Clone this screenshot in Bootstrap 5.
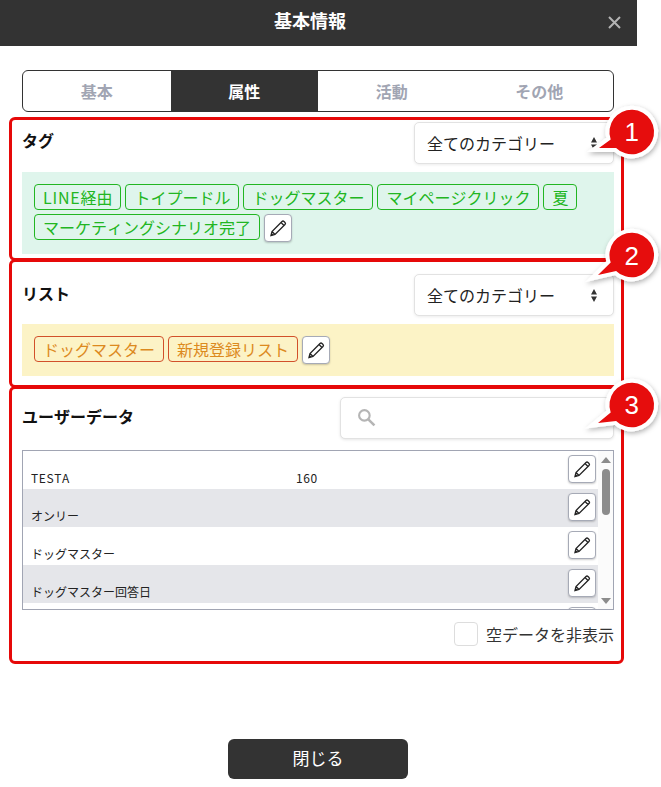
<!DOCTYPE html>
<html lang="ja"><head><meta charset="utf-8">
<title>基本情報</title>
<link rel="stylesheet" href="https://cdn.jsdelivr.net/npm/bootstrap@5.3.0/dist/css/bootstrap.min.css">
<style>
html,body{background:#fff;}
body{font-family:"Noto Sans CJK JP","Liberation Sans",sans-serif;color:#111;width:661px;height:787px;overflow:hidden;position:relative;font-kerning:none;}
.shell{width:637px;height:787px;display:flex;flex-direction:column;}
.topbar{background:#333;height:46px;color:#fff;font-weight:700;font-size:18px;position:relative;padding:0 17px 6px 0;}
.closer{position:absolute;left:608px;top:16px;width:13px;height:13px;}
.mainarea{padding:24px 23px 0 22px;flex:1 1 auto;}
.tabbar{height:42px;border:1px solid #333;border-radius:6px;overflow:hidden;margin-bottom:5px;}
.tabitem{flex:1 1 0;font-weight:700;font-size:16px;color:#a1a5b3;}
.tabitem.on{background:#333;color:#fff;}
.zone{border:3px solid #e60909;border-radius:6px;margin:0 -10px 0 -13px;padding:2px 7px 0 10px;}
.zone1{height:144px;}
.zone2{height:129px;margin-top:-2px;padding-top:12px;}
.zone3{height:278px;margin-top:-2px;padding-top:8px;}
.zonehead{height:42px;margin-bottom:8px;}
.zonehead h2{font-size:16px;font-weight:700;margin:0;color:#111;padding-bottom:2px;}
.zone1 .zonehead h2{padding-bottom:4px;}
.pick.form-select{width:200px;height:42px;font-size:16px;padding:0 12px;color:#222;border:1px solid #e2e2e2;border-radius:5px;box-shadow:0 1px 3px rgba(0,0,0,.08);
 background-image:url("data:image/svg+xml,%3Csvg xmlns='http://www.w3.org/2000/svg' width='6' height='13'%3E%3Cpath d='M3 0l3 5.5h-6zM3 13l3-5.5h-6z' fill='%23333'/%3E%3C/svg%3E");background-size:6px 13px;background-position:right 16px center;}
.tagpanel{padding:12px 12px 0;gap:4px;align-content:flex-start;}
.panelgreen{background:#dff5ec;height:82px;}
.panelyellow{background:#fcf3c6;height:52px;}
.chip{font-size:16px;line-height:24px;height:26px;padding:0 8px;border-radius:4px;border:1px solid;white-space:nowrap;}
.chipgreen{color:#22b622;border-color:#22b622;}
.chiporange{color:#dc8a1e;border-color:#d2502a;}
.widelatin{letter-spacing:.75px;}
.widedigits{letter-spacing:.6px;}
.penbtn.btn{width:28px;height:28px;padding:0;background:#fff;border:1px solid #a6aab6;border-radius:4px;box-shadow:0 1px 2px rgba(0,0,0,.2);display:flex;align-items:center;justify-content:center;}
.searcher{width:274px;height:42px;position:relative;}
.searcher .form-control{height:42px;border:1px solid #e2e2e2;border-radius:5px;box-shadow:0 1px 3px rgba(0,0,0,.1);padding-left:44px;}
.glass{position:absolute;left:17px;top:11px;}
.datawrap{height:160px;border:1px solid #a1a5b3;overflow:hidden;margin-top:11px;background:#fff;}
.datalist{flex:1 1 auto;}
.datarow{height:38px;position:relative;font-size:12px;color:#222;}
.datarow.alt{background:#e5e6ea;}
.rowname{position:absolute;left:8px;bottom:2px;line-height:18px;}
.rowval{position:absolute;left:273px;bottom:2px;line-height:18px;}
.datarow .penbtn{position:absolute;left:545px;top:4px;}
.scrolltrack{width:15px;background:#fbfbfb;position:relative;flex:0 0 15px;}
.thumb{position:absolute;left:4px;top:18px;width:8px;height:46px;background:#8c8c8c;border-radius:4px;}
.arrowup,.arrowdown{position:absolute;left:3px;width:0;height:0;border-left:5px solid transparent;border-right:5px solid transparent;}
.arrowup{top:6px;border-bottom:6px solid #8c8c8c;}
.arrowdown{bottom:5px;border-top:6px solid #8c8c8c;}
.hideempty{margin-top:12px;height:24px;gap:8px;font-size:16px;color:#333;}
.hideempty .form-check-input{width:24px;height:24px;margin:0;border:1px solid #ddd;border-radius:4px;}
.hideempty label{line-height:24px;}
.closebtn.btn{width:180px;height:40px;background:#333;color:#fff;border:0;border-radius:6px;font-size:17px;padding:0 0 2px;}
.footbar{height:48px;padding-right:1px;}
.marker{position:absolute;left:0;top:0;pointer-events:none;}
.marker text{font-family:"Liberation Sans",sans-serif;font-size:26px;fill:#fff;text-anchor:middle;}
.balloon{fill:#e60909;stroke:#fff;stroke-width:8;stroke-linejoin:miter;stroke-miterlimit:10;paint-order:stroke;}
</style></head>
<body>
<div class="shell">
  <div class="topbar d-flex align-items-center justify-content-center">基本情報
    <svg class="closer" viewBox="0 0 13 13"><path d="M1 1l11 11M12 1L1 12" stroke="#b4b4b4" stroke-width="2" fill="none"/></svg>
  </div>
  <div class="mainarea">
    <div class="tabbar d-flex">
      <div class="tabitem d-flex align-items-center justify-content-center">基本</div>
      <div class="tabitem on d-flex align-items-center justify-content-center">属性</div>
      <div class="tabitem d-flex align-items-center justify-content-center">活動</div>
      <div class="tabitem d-flex align-items-center justify-content-center">その他</div>
    </div>

    <section class="zone zone1">
      <div class="zonehead d-flex justify-content-between align-items-center">
        <h2>タグ</h2>
        <select class="form-select pick"><option>全てのカテゴリー</option></select>
      </div>
      <div class="tagpanel panelgreen d-flex flex-wrap align-items-start">
        <span class="chip chipgreen"><span class="widelatin">LINE</span>経由</span><span class="chip chipgreen">トイプードル</span><span class="chip chipgreen">ドッグマスター</span><span class="chip chipgreen">マイページクリック</span><span class="chip chipgreen">夏</span><span class="chip chipgreen">マーケティングシナリオ完了</span>
        <button class="btn penbtn" type="button"><svg width="18" height="18" viewBox="0 0 18 18"><path d="M2 16.5L3 12.5L13 2.5Q14 1.5 15 2.5L16 3.5Q17 4.5 16 5.5L6 15.5ZM3 12.5L6 15.5M12 3.5L15 6.5" fill="none" stroke="#222" stroke-width="1.3"/><path d="M2 16.5L2.6 14L4.5 15.9Z" fill="#222"/></svg></button>
      </div>
    </section>

    <section class="zone zone2">
      <div class="zonehead d-flex justify-content-between align-items-center">
        <h2>リスト</h2>
        <select class="form-select pick"><option>全てのカテゴリー</option></select>
      </div>
      <div class="tagpanel panelyellow d-flex flex-wrap align-items-start">
        <span class="chip chiporange">ドッグマスター</span><span class="chip chiporange">新規登録リスト</span>
        <button class="btn penbtn" type="button"><svg width="18" height="18" viewBox="0 0 18 18"><path d="M2 16.5L3 12.5L13 2.5Q14 1.5 15 2.5L16 3.5Q17 4.5 16 5.5L6 15.5ZM3 12.5L6 15.5M12 3.5L15 6.5" fill="none" stroke="#222" stroke-width="1.3"/><path d="M2 16.5L2.6 14L4.5 15.9Z" fill="#222"/></svg></button>
      </div>
    </section>

    <section class="zone zone3">
      <div class="zonehead d-flex justify-content-between align-items-center">
        <h2>ユーザーデータ</h2>
        <div class="searcher">
          <input class="form-control" type="text" aria-label="検索">
          <svg class="glass" width="19" height="19" viewBox="0 0 18 18"><circle cx="7" cy="7" r="5" fill="none" stroke="#b5b5b5" stroke-width="2"/><path d="M10.5 10.5l6 6" stroke="#b5b5b5" stroke-width="2.4"/></svg>
        </div>
      </div>
      <div class="datawrap d-flex">
        <div class="datalist">
          <div class="datarow"><span class="rowname widedigits">TESTA</span><span class="rowval widedigits">160</span><button class="btn penbtn" type="button"><svg width="18" height="18" viewBox="0 0 18 18"><path d="M2 16.5L3 12.5L13 2.5Q14 1.5 15 2.5L16 3.5Q17 4.5 16 5.5L6 15.5ZM3 12.5L6 15.5M12 3.5L15 6.5" fill="none" stroke="#222" stroke-width="1.3"/><path d="M2 16.5L2.6 14L4.5 15.9Z" fill="#222"/></svg></button></div>
          <div class="datarow alt"><span class="rowname">オンリー</span><button class="btn penbtn" type="button"><svg width="18" height="18" viewBox="0 0 18 18"><path d="M2 16.5L3 12.5L13 2.5Q14 1.5 15 2.5L16 3.5Q17 4.5 16 5.5L6 15.5ZM3 12.5L6 15.5M12 3.5L15 6.5" fill="none" stroke="#222" stroke-width="1.3"/><path d="M2 16.5L2.6 14L4.5 15.9Z" fill="#222"/></svg></button></div>
          <div class="datarow"><span class="rowname">ドッグマスター</span><button class="btn penbtn" type="button"><svg width="18" height="18" viewBox="0 0 18 18"><path d="M2 16.5L3 12.5L13 2.5Q14 1.5 15 2.5L16 3.5Q17 4.5 16 5.5L6 15.5ZM3 12.5L6 15.5M12 3.5L15 6.5" fill="none" stroke="#222" stroke-width="1.3"/><path d="M2 16.5L2.6 14L4.5 15.9Z" fill="#222"/></svg></button></div>
          <div class="datarow alt"><span class="rowname">ドッグマスター回答日</span><button class="btn penbtn" type="button"><svg width="18" height="18" viewBox="0 0 18 18"><path d="M2 16.5L3 12.5L13 2.5Q14 1.5 15 2.5L16 3.5Q17 4.5 16 5.5L6 15.5ZM3 12.5L6 15.5M12 3.5L15 6.5" fill="none" stroke="#222" stroke-width="1.3"/><path d="M2 16.5L2.6 14L4.5 15.9Z" fill="#222"/></svg></button></div>
          <div class="datarow"><button class="btn penbtn" type="button"></button></div>
        </div>
        <div class="scrolltrack"><div class="arrowup"></div><div class="thumb"></div><div class="arrowdown"></div></div>
      </div>
      <div class="hideempty d-flex justify-content-end align-items-center">
        <input class="form-check-input" type="checkbox" id="hideEmpty"><label for="hideEmpty">空データを非表示</label>
      </div>
    </section>
  </div>
  <div class="footbar d-flex justify-content-center align-items-start">
    <button class="btn closebtn" type="button">閉じる</button>
  </div>
</div>

<svg class="marker" width="661" height="787" viewBox="0 0 661 787">
  <defs><filter id="sh" x="-30%" y="-30%" width="160%" height="160%"><feDropShadow dx="1" dy="2" stdDeviation="2.5" flood-opacity=".3"/></filter></defs>
  <g filter="url(#sh)">
    <path class="balloon" d="M610.7 139.4A22.3 22.3 0 1 1 616.1 147.9L599 148Z"/>
    <path class="balloon" d="M610.7 262.4A22.3 22.3 0 1 1 616.1 270.9L598 275Z"/>
    <path class="balloon" d="M610.7 412.4A22.3 22.3 0 1 1 616.1 420.9L598 423Z"/>
  </g>
  <text x="631.7" y="141">1</text>
  <text x="631.7" y="264.5">2</text>
  <text x="631.7" y="414">3</text>
</svg>
<script src="https://cdn.jsdelivr.net/npm/bootstrap@5.3.0/dist/js/bootstrap.bundle.min.js"></script>
</body></html>
